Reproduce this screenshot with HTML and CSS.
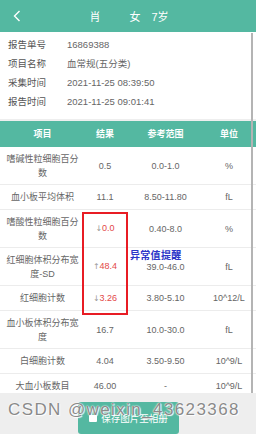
FILE: index.html
```html
<html>

<head>
    <link rel="stylesheet" href="styles.css">
</head>

<body>
    <div class="page">
        <div class="top-bar">
            <svg class="back" width="8" height="12" viewBox="0 0 8 12">
                <polyline points="6.5,1 1.5,6 6.5,11" fill="none" stroke="#fff" stroke-width="1.4" />
            </svg>
            <div class="title">
                <span class="t-name">肖</span>
                <span class="t-sex">女</span>
                <span>7岁</span>
            </div>
        </div>
        <div class="scroll">
            <div class="scroll-bar"></div>
            <ul class="info">
                <li><span class="lab">报告单号</span><span class="val">16869388</span></li>
                <li><span class="lab">项目名称</span><span class="val">血常规(五分类)</span></li>
                <li><span class="lab">采集时间</span><span class="val">2021-11-25 08:39:50</span></li>
                <li><span class="lab">报告时间</span><span class="val">2021-11-25 09:01:41</span></li>
            </ul>
            <div class="table">
                <div class="row head">
                    <div class="c1">项目</div>
                    <div class="c2">结果</div>
                    <div class="c3">参考范围</div>
                    <div class="c4">单位</div>
                </div>
                <div class="row">
                    <div class="c1">嗜碱性粒细胞百分数</div>
                    <div class="c2">0.5</div>
                    <div class="c3">0.0-1.0</div>
                    <div class="c4">%</div>
                </div>
                <div class="row">
                    <div class="c1">血小板平均体积</div>
                    <div class="c2">11.1</div>
                    <div class="c3">8.50-11.80</div>
                    <div class="c4">fL</div>
                </div>
                <div class="row">
                    <div class="c1">嗜酸性粒细胞百分数</div>
                    <div class="c2 bad"><i>↓</i>0.0</div>
                    <div class="c3">0.40-8.0</div>
                    <div class="c4">%</div>
                </div>
                <div class="row">
                    <div class="c1">红细胞体积分布宽度-SD</div>
                    <div class="c2 bad"><i>↑</i>48.4</div>
                    <div class="c3">39.0-46.0</div>
                    <div class="c4">fL</div>
                </div>
                <div class="row">
                    <div class="c1">红细胞计数</div>
                    <div class="c2 bad"><i>↓</i>3.26</div>
                    <div class="c3">3.80-5.10</div>
                    <div class="c4">10^12/L</div>
                </div>
                <div class="row">
                    <div class="c1">血小板体积分布宽度</div>
                    <div class="c2">16.7</div>
                    <div class="c3">10.0-30.0</div>
                    <div class="c4">fL</div>
                </div>
                <div class="row">
                    <div class="c1">白细胞计数</div>
                    <div class="c2">4.04</div>
                    <div class="c3">3.50-9.50</div>
                    <div class="c4">10^9/L</div>
                </div>
                <div class="row">
                    <div class="c1">大血小板数目</div>
                    <div class="c2">46.00</div>
                    <div class="c3">-</div>
                    <div class="c4">10^9/L</div>
                </div>
            </div>
            <!-- 标注 -->
            <div class="mark-box"></div>
            <div class="mark-text">异常值提醒</div>
        </div>
        <div class="foot">
            <button class="save">
                <svg width="8" height="7" viewBox="0 0 8 7"><rect x="0" y="0" width="8" height="7" rx="1" fill="#fff" /></svg>
                保存图片至相册
            </button>
            <div class="water">CSDN @weixin_43623368</div>
        </div>
    </div>
</body>

</html>
```

FILE: styles.css
```css
body {
    margin: 0;
    font-family: "Liberation Sans", "Noto Sans CJK SC", sans-serif;
    background: #fff;
}

.page {
    width: 256px;
    height: 434px;
    display: flex;
    flex-direction: column;
    position: relative;
    overflow: hidden;
}

.top-bar {
    height: 32px;
    flex: none;
    background: #54b8a1;
    display: flex;
    align-items: center;
    position: relative;
    color: #fff;
    font-size: 11px;
}

.back {
    margin-left: 13px;
}

.title {
    position: absolute;
    left: 0;
    right: 0;
    text-align: center;
    padding-left: 2px;
}

.t-name {
    margin-right: 26px;
}

.t-sex {
    margin-right: 8px;
}

.scroll {
    flex: 1;
    overflow: hidden;
    position: relative;
    background: #eee;
}

.scroll-bar {
    position: absolute;
    right: 3px;
    top: 1px;
    bottom: 0;
    width: 2px;
    background: #b4b4b4;
    z-index: 5;
}

.info {
    list-style: none;
    margin: 0 0 2px 0;
    padding: 3px 0 8px 0;
    background: #fff;
    font-size: 9.5px;
}

.info li {
    height: 19px;
    line-height: 19px;
    display: flex;
}

.info .lab {
    width: 59px;
    padding-left: 8px;
    color: #555;
}

.info .val {
    color: #666;
}

.table {
    background: #fff;
    font-size: 9px;
    color: #666;
}

.row {
    display: flex;
    align-items: center;
    min-height: 24px;
    border-bottom: 1px solid #ececec;
    text-align: center;
    line-height: 14px;
}

.row>div {
    padding: 4.5px 0;
    box-sizing: border-box;
}

.row.head {
    background: #54b8a1;
    color: #fff;
    font-weight: bold;
    height: 26px;
    border-bottom: none;
}

.row>.c1 {
    width: 84px;
    padding: 4.5px 4px 4.5px 5px;
}

.c2 {
    width: 42px;
}

.c3 {
    width: 79px;
}

.c4 {
    width: 48px;
}

.bad {
    color: #e34848;
}

.bad i {
    font-style: normal;
    font-family: "DejaVu Sans", sans-serif;
    color: #999;
    font-size: 8px;
}

.mark-box {
    position: absolute;
    left: 82px;
    top: 180px;
    width: 42px;
    height: 99px;
    border: 2px solid #e81c24;
}

.mark-text {
    position: absolute;
    left: 130px;
    top: 215px;
    font-size: 10px;
    font-weight: bold;
    color: #2b35c8;
    letter-spacing: 0.3px;
}

.foot {
    height: 41px;
    flex: none;
    background: #eee;
    display: flex;
    justify-content: center;
    align-items: flex-end;
    position: relative;
}

.save {
    width: 101px;
    height: 32px;
    margin-left: 1px;
    border: none;
    border-radius: 3px;
    background: #54b8a1;
    color: #fff;
    font-family: "Noto Sans CJK SC", sans-serif;
    font-size: 9.5px;
    display: flex;
    align-items: center;
    justify-content: center;
    gap: 4px;
    padding: 0;
}

.water {
    position: absolute;
    left: 8px;
    top: 7px;
    font-size: 17px;
    letter-spacing: 1.4px;
    color: #8a8a8a;
    text-shadow: 0 0 1px #fff, 0 0 2px #fff, 1px 1px 1px #fff;
    white-space: nowrap;
}
```
